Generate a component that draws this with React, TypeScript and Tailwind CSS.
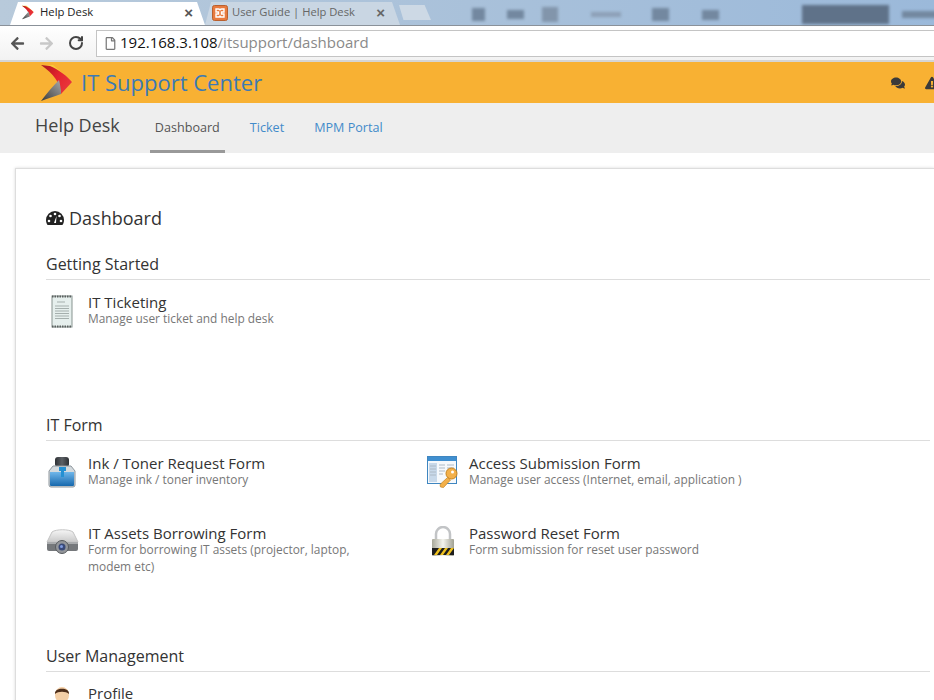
import React from 'react'
import { FaArrowLeft, FaArrowRight, FaComments, FaExclamationTriangle, FaRegFile } from 'react-icons/fa'
import { LuRotateCw } from 'react-icons/lu'

const Logo = ({ w, h, id }: { w: number; h: number; id: string }) => (
  <svg width={w} height={h} viewBox="0 0 32 38">
    <defs>
      <linearGradient id={id + 'r'} x1="0" y1="0" x2="1" y2="0.6">
        <stop offset="0" stopColor="#a5141c" />
        <stop offset="0.55" stopColor="#e3242d" />
        <stop offset="1" stopColor="#e8363c" />
      </linearGradient>
      <linearGradient id={id + 'g'} x1="0" y1="1" x2="1" y2="0">
        <stop offset="0" stopColor="#3a3a3a" />
        <stop offset="1" stopColor="#a8a8a8" />
      </linearGradient>
    </defs>
    <path d="M0 1 L12 1 L32 18 L26 17 Z" fill="#fbc93a" />
    <path d="M0 1 L9 2 C18 6 26 12 31 18 L20 30 C20 20 12 9 0 1 Z" fill={`url(#${id}r)`} />
    <path d="M0 37 C6 29 12 22 18 16 C19 20 20 25 20 30 C14 32 6 35 0 37 Z" fill={`url(#${id}g)`} />
  </svg>
)

const XamppIcon = () => (
  <svg width="16" height="16" viewBox="0 0 16 16" className="shrink-0">
    <rect x="0.500" y="0.500" width="15" height="15" rx="2" fill="#e87a3e" stroke="#b9602f" />
    <path d="M4 4h2.500a1.500 1.500 0 0 1 1.500 1.500A1.500 1.500 0 0 1 9.500 4H12v3h-2.500v2H12v3H9.500A1.500 1.500 0 0 1 8 10.500 1.500 1.500 0 0 1 6.500 12H4V9h2.500V7H4z" fill="none" stroke="#fff" strokeWidth="1.400" />
  </svg>
)

const GaugeIcon = () => (
  <svg width="18" height="16" viewBox="0 0 18 16" className="mr-[5px]">
    <path d="M9 1a9 9 0 0 0-9 9c0 2 .6 3.800 1.600 5h14.800c1-1.200 1.600-3 1.600-5a9 9 0 0 0-9-9z" fill="#222" />
    <circle cx="9" cy="4" r="1.300" fill="#fff" />
    <circle cx="4.500" cy="6" r="1.300" fill="#fff" />
    <circle cx="13.500" cy="6" r="1.300" fill="#fff" />
    <circle cx="3" cy="11" r="1.300" fill="#fff" />
    <circle cx="15" cy="11" r="1.300" fill="#fff" />
    <path d="M10.500 6 L10 13 L8 13 Z" fill="#fff" />
  </svg>
)

const TicketIcon = () => (
  <svg width="22" height="33" viewBox="0 0 22 33" className="ml-[5px]">
    <rect x="1" y="1" width="20" height="31" fill="#e6efed" stroke="#87938f" />
    <path d="M1 1.500h20M1 31.500h20" stroke="#5a5f5e" strokeWidth="2" strokeDasharray="1.500 1" />
    <path d="M6 7h8M4 11h14M4 13.500h14M4 16h14M4 18.500h14M4 21h14M4 23.500h14" stroke="#a5afad" />
  </svg>
)

const InkIcon = () => (
  <svg width="30" height="32" viewBox="0 0 30 32" className="ml-[1px]">
    <defs>
      <linearGradient id="inkb" x1="0" y1="0" x2="0" y2="1">
        <stop offset="0" stopColor="#6fb6ea" />
        <stop offset="1" stopColor="#1668ad" />
      </linearGradient>
      <linearGradient id="inkc" x1="0" y1="0" x2="1" y2="0">
        <stop offset="0" stopColor="#2d3034" />
        <stop offset="0.5" stopColor="#5c6065" />
        <stop offset="1" stopColor="#2d3034" />
      </linearGradient>
    </defs>
    <rect x="8" y="1" width="14" height="10" rx="3" fill="url(#inkc)" />
    <path d="M6 10h18l4 5v14a2 2 0 0 1-2 2H4a2 2 0 0 1-2-2V15z" fill="#d4dade" stroke="#8f979d" />
    <path d="M3 16h24v13a1 1 0 0 1-1 1H4a1 1 0 0 1-1-1z" fill="url(#inkb)" />
    <path d="M12 11h7v4h-2v6h-3v-6h-2z" fill="#2590d2" />
  </svg>
)

const ProjectorIcon = () => (
  <svg width="33" height="27" viewBox="0 0 33 27" className="mt-[3px]">
    <defs>
      <linearGradient id="pj" x1="0" y1="0" x2="0" y2="1">
        <stop offset="0" stopColor="#f6f6f6" />
        <stop offset="1" stopColor="#c9c9c9" />
      </linearGradient>
    </defs>
    <path d="M6 3C10 0 23 0 27 3l5 10H1z" fill="url(#pj)" stroke="#c4c4c4" />
    <path d="M1 13h31v7a2 2 0 0 1-2 2H3a2 2 0 0 1-2-2z" fill="#75787b" />
    <path d="M1 13h31v2H1z" fill="#a9abad" />
    <circle cx="16" cy="18" r="6.500" fill="#93969a" stroke="#585b5e" />
    <circle cx="16" cy="18" r="3.500" fill="#3a4a78" />
    <circle cx="15.500" cy="17.500" r="1.500" fill="#7f9be0" />
  </svg>
)

const AccessIcon = () => (
  <svg width="31" height="32" viewBox="0 0 31 32">
    <rect x="0.500" y="0.500" width="29" height="27" fill="#f6f9fc" stroke="#3f86c0" />
    <rect x="1" y="1" width="28" height="4" fill="#3f8fd0" />
    <rect x="2" y="7" width="8" height="19" fill="#c8d9ea" />
    <path d="M3 10h6M3 13h6M3 16h6M3 19h6M12 9h6M20 9h7M12 12h6M20 12h7M12 15h6M20 15h3M12 18h4" stroke="#aebac6" />
    <circle cx="24.500" cy="17.500" r="5.500" fill="#f3b04a" stroke="#c4831f" />
    <circle cx="25.500" cy="16" r="1.500" fill="#fff" />
    <path d="M20.500 21.500L13 28.500l.5 2.500 3 .5 7-7.500z" fill="#f3b04a" stroke="#c4831f" strokeWidth=".7" />
  </svg>
)

const LockIcon = () => (
  <svg width="26" height="32" viewBox="0 0 26 32" className="ml-[3px]">
    <defs>
      <linearGradient id="lk" x1="0" y1="0" x2="1" y2="0">
        <stop offset="0" stopColor="#a8a89a" />
        <stop offset="0.5" stopColor="#f4f4ee" />
        <stop offset="1" stopColor="#a0a092" />
      </linearGradient>
    </defs>
    <path d="M6 14V8a7 7 0 0 1 14 0v6" fill="none" stroke="#c2c4c6" strokeWidth="2.500" />
    <rect x="2" y="13" width="22" height="17" rx="1" fill="url(#lk)" />
    <rect x="2" y="22" width="22" height="7" fill="#1e1e1e" />
    <path d="M4 29l5-7h3l-5 7zM10 29l5-7h3l-5 7zM16 29l5-7h3l-5 7z" fill="#efc11e" />
  </svg>
)

const ProfileIcon = () => (
  <svg width="18" height="30" viewBox="0 0 18 30" className="ml-[7px]">
    <ellipse cx="9" cy="9" rx="7" ry="8" fill="#f4cfa6" />
    <path d="M2 8C1 1 17 1 16 8 13 5 5 5 2 8z" fill="#4d2e1a" />
  </svg>
)

const Item = ({ icon, title, desc }: { icon: React.ReactNode; title: string; desc: string }) => (
  <div className="flex">
    <div className="w-[42px] shrink-0">{icon}</div>
    <div className="mt-[-1px] w-[280px]">
      <div className="text-[15px] leading-[16px] text-[#333]">{title}</div>
      <div className="text-[11.900px] leading-[17px] text-[#777]">{desc}</div>
    </div>
  </div>
)

const Heading = ({ children }: { children: React.ReactNode }) => (
  <div className="border-b border-[#ddd] pb-[4px] text-[16px] leading-[22px] text-[#333]">{children}</div>
)

export default function App() {
  return (
    <div className="w-[934px] h-[700px] overflow-hidden bg-white font-['Open_Sans',sans-serif]">
      {/* tab strip */}
      <div className="flex h-[25px] items-end bg-gradient-to-r from-[#b8cadb] via-[#a9c1da] to-[#9bb9da] pl-[10px]">
        <div className="flex h-[23px] w-[195px] shrink-0 items-center bg-white pb-[2px] pl-[12px] pr-[12px] [clip-path:polygon(0_100%,8px_0,187px_0,100%_100%)]">
          <Logo w={12} h={15} id="t" />
          <span className="ml-[6px] flex-1 text-[11.300px] text-[#222]">Help Desk</span>
          <span className="font-['Liberation_Sans',sans-serif] text-[15px] font-bold leading-none text-[#555]">×</span>
        </div>
        <div className="flex h-[23px] w-[195px] shrink-0 items-center bg-[#c9d6e3] pb-[2px] pl-[7px] pr-[15px] [clip-path:polygon(0_100%,6px_0,187px_0,100%_100%)]">
          <XamppIcon />
          <span className="ml-[4px] flex-1 text-[11.200px] text-[#666]">User Guide | Help Desk</span>
          <span className="font-['Liberation_Sans',sans-serif] text-[15px] font-bold leading-none text-[#666]">×</span>
        </div>
        <div className="mb-[5px] ml-[-1px] h-[15px] w-[32px] shrink-0 bg-[#cdd9e5] [clip-path:polygon(0_0,80%_0,100%_100%,14%_100%)]" />
        <div className="mb-[1px] flex flex-1 items-center blur-[1.500px]">
          <div className="ml-[41px] h-[13px] w-[13px] bg-[#7388a0]" />
          <div className="ml-[22px] h-[9px] w-[17px] bg-[#7388a0]" />
          <div className="ml-[18px] h-[15px] w-[16px] bg-[#8295ab]" />
          <div className="ml-[33px] h-[5px] w-[30px] bg-[#8da0b7]" />
          <div className="ml-[31px] h-[13px] w-[17px] bg-[#7388a0]" />
          <div className="ml-[33px] h-[10px] w-[17px] bg-[#7388a0]" />
          <div className="ml-[83px] h-[19px] w-[87px] bg-[#5f7289]" />
          <div className="ml-[13px] h-[7px] w-[40px] bg-[#7388a0]" />
        </div>
      </div>
      {/* toolbar */}
      <div className="flex h-[35px] items-center border-t border-[#8a9199] bg-gradient-to-b from-white to-[#f2f2f2] pl-[10px]">
        <FaArrowLeft size={15} className="text-[#555]" />
        <FaArrowRight size={15} className="ml-[14px] text-[#c8c8c8]" />
        <LuRotateCw size={16} strokeWidth={3} className="ml-[14px] text-[#444]" />
        <div className="ml-[12px] flex h-[27px] flex-1 items-center border border-r-0 border-[#c4c4c4] bg-white pl-[7px]">
          <FaRegFile size={13} className="text-[#777]" />
          <span className="mb-[2px] ml-[3px] text-[15px] text-[#111]">192.168.3.108<span className="text-[#8a8a8a]">/itsupport/dashboard</span></span>
        </div>
      </div>
      <div className="h-[2px] bg-[#d5d5d5]" />
      {/* app header */}
      <div className="flex h-[41px] items-center bg-[#f8b133] pl-[41px]">
        <Logo w={32} h={38} id="h" />
        <span className="ml-[8px] text-[22px] text-[#3c7ab5]">IT Support Center</span>
        <div className="ml-auto flex items-center gap-[20px]">
          <FaComments size={14} className="text-[#3a3a3a]" />
          <FaExclamationTriangle size={14} className="mr-[-5px] text-[#3a3a3a]" />
        </div>
      </div>
      {/* nav */}
      <div className="flex h-[50px] bg-[#eeeeee] pl-[35px]">
        <span className="mt-[9px] text-[18px] leading-[26px] text-[#444]">Help Desk</span>
        <div className="ml-[30px] flex h-full items-center border-b-[3px] border-[#999] px-[5px] pt-[3px] text-[12.600px] text-[#555]">Dashboard</div>
        <div className="ml-[25px] flex h-full items-center pt-[1px] text-[12.600px] text-[#428bca]">Ticket</div>
        <div className="ml-[30px] flex h-full items-center pt-[1px] text-[12.600px] text-[#428bca]">MPM Portal</div>
      </div>
      {/* content */}
      <div className="ml-[15px] mt-[15px] h-[600px] border-l border-t border-[#ddd] pl-[30px] pr-[4px] pt-[35px] shadow-[0_0_3px_rgba(0,0,0,0.15)]">
        <div className="flex items-center text-[18px] leading-[28px] text-[#333]">
          <GaugeIcon />
          Dashboard
        </div>
        <div className="mt-[21px]"><Heading>Getting Started</Heading></div>
        <div className="mt-[15px] h-[119px]">
          <Item icon={<TicketIcon />} title="IT Ticketing" desc="Manage user ticket and help desk" />
        </div>
        <Heading>IT Form</Heading>
        <div className="mt-[15px] grid h-[189px] auto-rows-[70px] grid-cols-[381px_1fr]">
          <Item icon={<InkIcon />} title="Ink / Toner Request Form" desc="Manage ink / toner inventory" />
          <Item icon={<AccessIcon />} title="Access Submission Form" desc="Manage user access (Internet, email, application )" />
          <Item icon={<ProjectorIcon />} title="IT Assets Borrowing Form" desc="Form for borrowing IT assets (projector, laptop, modem etc)" />
          <Item icon={<LockIcon />} title="Password Reset Form" desc="Form submission for reset user password" />
        </div>
        <Heading>User Management</Heading>
        <div className="mt-[14px]">
          <Item icon={<ProfileIcon />} title="Profile" desc="" />
        </div>
      </div>
    </div>
  )
}
